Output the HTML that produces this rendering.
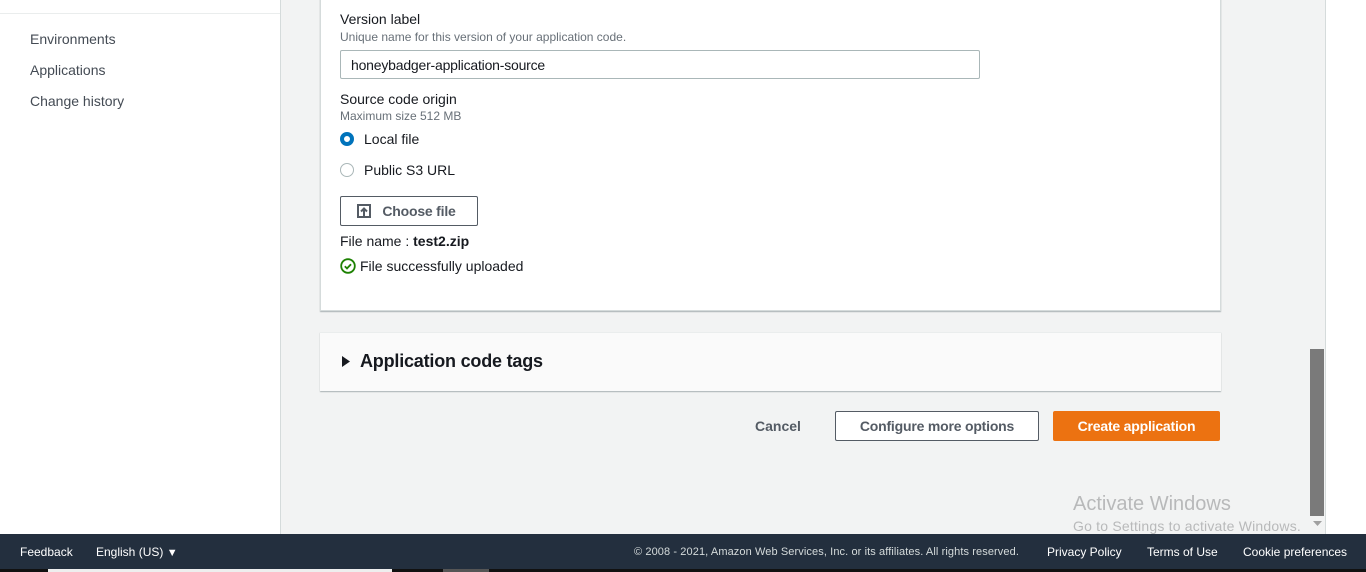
<!DOCTYPE html>
<html><head><meta charset="utf-8"><style>
*{box-sizing:border-box;margin:0;padding:0}
body{width:1366px;height:572px;overflow:hidden;background:#f2f3f3;font-family:"Liberation Sans",sans-serif;color:#16191f;position:relative}
.abs{position:absolute}
.side{left:0;top:0;width:281px;height:534px;background:#fff;border-right:1px solid #d5dbdb}
.side .line{position:absolute;left:0;top:13px;width:280px;height:1px;background:#eaeded}
.side a{position:absolute;left:30px;font-size:14px;color:#444b54}
.card{left:320px;top:-2px;width:901px;height:313px;background:#fff;border:1px solid #d5dbdb;border-top:none;box-shadow:0 1px 1px rgba(0,28,36,.3)}
.lbl{font-size:14px;color:#16191f}
.desc{font-size:12px;color:#687078}
.t{position:absolute;white-space:nowrap}
.input{left:340px;top:50px;width:640px;height:29px;border:1px solid #aab7b8;border-radius:2px;background:#fff}
.tags{left:320px;top:332px;width:901px;height:59px;background:#fafafa;border-top:1px solid #eaeded;box-shadow:0 1px 1px rgba(0,28,36,.3)}
.btn{position:absolute;height:30px;border-radius:2px;font-size:14px;font-weight:bold;text-align:center;line-height:28px}
.footer{left:0;top:534px;width:1366px;height:35px;background:#232f3e;color:#d5dbdb;font-size:12px}
.footer span{position:absolute;top:11px;white-space:nowrap}
</style></head><body>
<div class="abs side"><div class="line"></div>
<a style="top:31px">Environments</a><a style="top:62px">Applications</a><a style="top:93px">Change history</a></div>

<div class="abs card"></div>
<div class="t lbl" style="left:340px;top:11px">Version label</div>
<div class="t desc" style="left:340px;top:30px">Unique name for this version of your application code.</div>
<div class="abs input"><span class="t" style="left:10px;top:6px;font-size:14px;letter-spacing:-0.2px">honeybadger-application-source</span></div>
<div class="t lbl" style="left:340px;top:91px">Source code origin</div>
<div class="t desc" style="left:340px;top:109px">Maximum size 512 MB</div>
<div class="abs" style="left:340px;top:132px;width:14px;height:14px;border-radius:50%;border:4px solid #0073bb;background:#fff"></div>
<div class="t lbl" style="left:364px;top:131px">Local file</div>
<div class="abs" style="left:340px;top:163px;width:14px;height:14px;border-radius:50%;border:1px solid #aab7b8;background:#fff"></div>
<div class="t lbl" style="left:364px;top:162px">Public S3 URL</div>
<div class="btn" style="left:340px;top:196px;width:138px;border:1px solid #545b64;color:#545b64;background:#fff;padding-left:20px;letter-spacing:-0.2px">Choose file
<svg class="abs" style="left:16px;top:7px" width="14" height="14" viewBox="0 0 14 14"><path d="M1 1h12v12H1z" fill="none" stroke="#545b64" stroke-width="2"/><path d="M7 12V5M4 7.5l3-3 3 3" fill="none" stroke="#545b64" stroke-width="2"/></svg></div>
<div class="t lbl" style="left:340px;top:233px">File name : <b>test2.zip</b></div>
<svg class="abs" style="left:340px;top:258px" width="16" height="16" viewBox="0 0 16 16"><circle cx="8" cy="8" r="6.8" fill="none" stroke="#1d8102" stroke-width="1.8"/><path d="M4.8 8.2l2.2 2.2 4-4.2" fill="none" stroke="#1d8102" stroke-width="1.8"/></svg>
<div class="t lbl" style="left:360px;top:258px">File successfully uploaded</div>

<div class="abs tags"><svg class="abs" style="left:22px;top:23px" width="8" height="11"><path d="M0 0l8 5.5L0 11z" fill="#16191f"/></svg>
<span class="t" style="left:40px;top:18px;font-size:18px;font-weight:bold;letter-spacing:-0.2px">Application code tags</span></div>

<div class="btn" style="left:745px;top:412px;width:66px;color:#545b64">Cancel</div>
<div class="btn" style="left:835px;top:411px;width:204px;border:1px solid #545b64;color:#545b64;background:#fff;letter-spacing:-0.2px">Configure more options</div>
<div class="btn" style="left:1053px;top:411px;width:167px;background:#ec7211;color:#fff;line-height:30px;letter-spacing:-0.2px">Create application</div>

<div class="abs" style="left:1326px;top:0;width:40px;height:534px;background:#fff"></div>
<div class="abs" style="left:1325px;top:0;width:1px;height:534px;background:#d5dbdb"></div>
<div class="abs" style="left:1310px;top:349px;width:14px;height:167px;background:#7a7a7a"></div>
<svg class="abs" style="left:1313px;top:521px" width="9" height="6"><path d="M0 0h9L4.5 5z" fill="#a0a0a0"/></svg>
<div class="t" style="left:1073px;top:493px;font-size:20px;color:#b8b9ba">Activate Windows</div>
<div class="t" style="left:1073px;top:518px;font-size:14px;color:#b8b9ba;letter-spacing:0.2px">Go to Settings to activate Windows.</div>

<div class="abs footer">
<span style="left:20px;color:#fff">Feedback</span>
<span style="left:96px;color:#fff">English (US) <span style="position:static;font-size:11px">&#9660;</span></span>
<span style="left:634px;font-size:11px;top:12px;letter-spacing:0.1px">© 2008 - 2021, Amazon Web Services, Inc. or its affiliates. All rights reserved.</span>
<span style="left:1047px;color:#fff">Privacy Policy</span>
<span style="left:1147px;color:#fff">Terms of Use</span>
<span style="left:1243px;color:#fff">Cookie preferences</span>
</div>
<div class="abs" style="left:0;top:569px;width:1366px;height:3px;background:#111"></div>
<div class="abs" style="left:48px;top:569px;width:344px;height:3px;background:#eee"></div>
<div class="abs" style="left:443px;top:569px;width:46px;height:3px;background:#555"></div>
</body></html>
